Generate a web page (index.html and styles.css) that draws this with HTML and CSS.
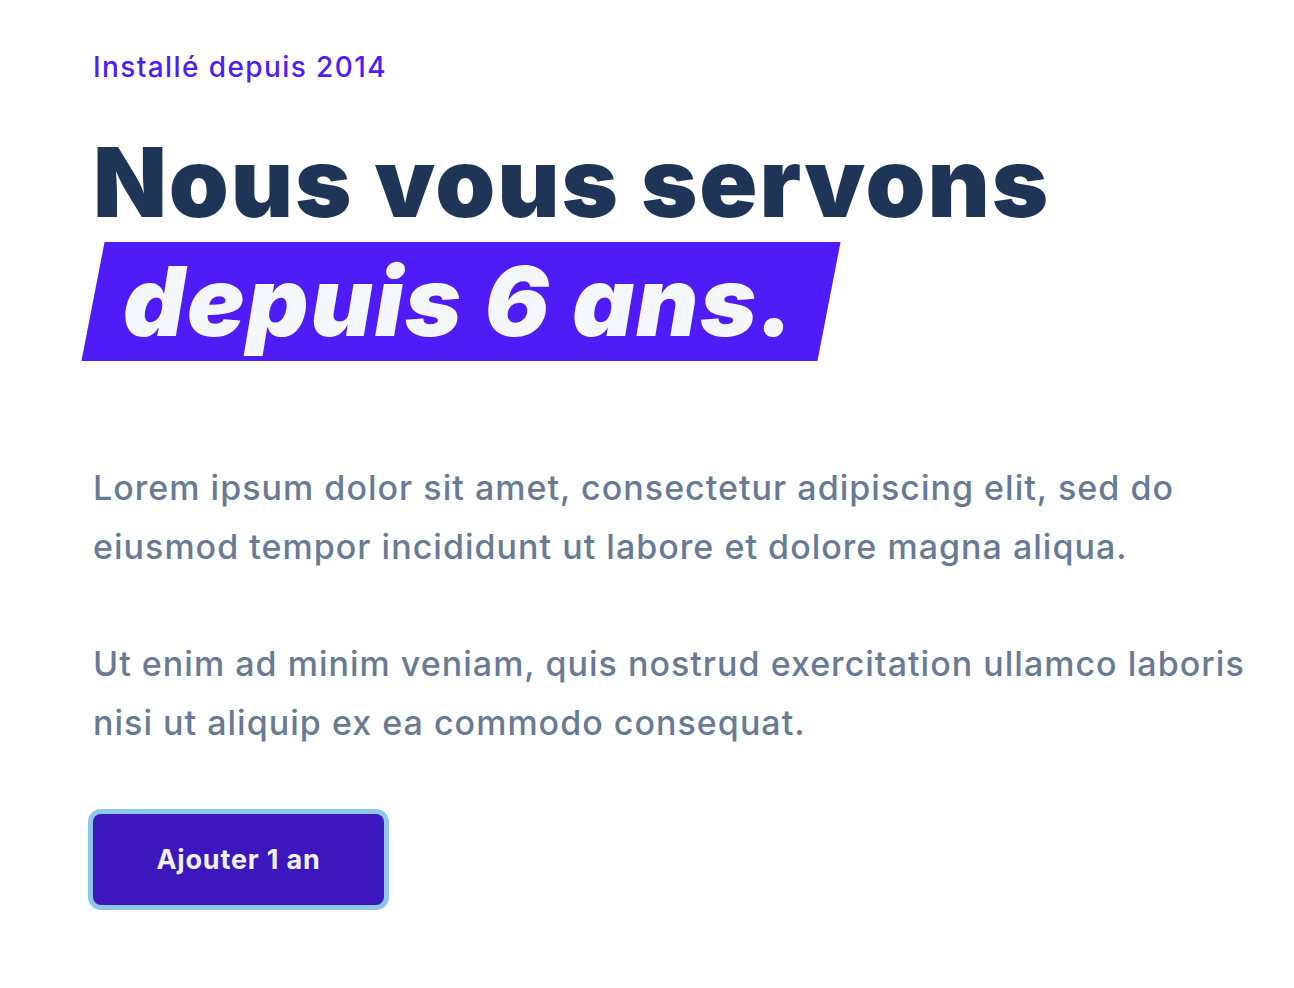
FILE: index.html
```html
<!DOCTYPE html>
<html lang="fr">
<head>
<meta charset="utf-8">
<link rel="stylesheet" href="styles.css">
</head>
<body>
<main class="hero">
  <p class="eyebrow">Installé depuis 2014</p>
  <h1 class="title">Nous vous servons <span class="highlight"><span class="highlight-text">depuis 6 ans.</span></span></h1>
  <div class="body">
    <p>Lorem ipsum dolor sit amet, consectetur adipiscing elit, sed do eiusmod tempor incididunt ut labore et dolore magna aliqua.</p>
    <p>Ut enim ad minim veniam, quis nostrud exercitation ullamco laboris nisi ut aliquip ex ea commodo consequat.</p>
  </div>
  <button class="cta" type="button">Ajouter 1 an</button>
</main>
</body>
</html>
```
FILE: styles.css
```css
* { box-sizing: border-box; }
html, body { margin: 0; padding: 0; background: #ffffff; }
body { font-family: Inter, "Noto Sans", sans-serif; }

.hero {
  padding: 46px 40px 80px 93px;
  display: flex;
  flex-direction: column;
  align-items: flex-start;
}

.eyebrow {
  margin: 0;
  font-size: 28px;
  font-weight: 500;
  letter-spacing: 0.05em;
  color: #4f1cf7;
  line-height: 42px;
}

.title {
  margin: 35px 0 0 0;
  font-size: 96px;
  font-weight: 900;
  line-height: 119px;
  letter-spacing: 0.02em;
  color: #1e3557;
}

.highlight {
  display: inline-block;
  position: relative;
  padding: 0 33px 0 30px;
  z-index: 0;
}
.highlight::before {
  content: "";
  position: absolute;
  inset: 0;
  background: #4f1cf7;
  transform: skewX(-11deg);
  z-index: -1;
}
.highlight-text {
  font-style: italic;
  color: #f4f7fb;
}

.body {
  margin-top: 97px;
  max-width: 1170px;
}
.body p {
  margin: 0 0 58px 0;
  font-size: 34px;
  font-weight: 500;
  line-height: 59px;
  letter-spacing: 0.03em;
  color: #687a94;
}
.body p:last-child { margin-bottom: 0; }

.cta {
  margin-top: 62px;
  width: 291px;
  height: 91px;
  border: none;
  border-radius: 8px;
  background: #3c17bd;
  color: #eef0fa;
  font-family: Inter, "Noto Sans", sans-serif;
  font-size: 27px;
  font-weight: 700;
  letter-spacing: 0.03em;
  box-shadow: 0 0 0 5px #8fc7ea;
}
```
